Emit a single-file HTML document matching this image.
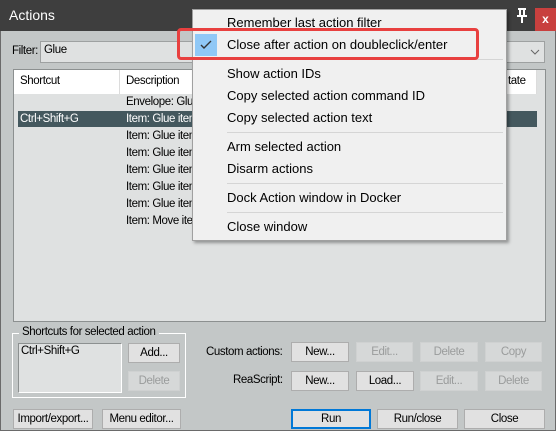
<!DOCTYPE html>
<html><head><style>
*{box-sizing:border-box;margin:0;padding:0}
body{width:556px;height:431px;overflow:hidden;background:#c3c7c7;font-family:"Liberation Sans",sans-serif;position:relative;font-size:12px;color:#000}
.a{position:absolute}
.t{font-size:11.5px;letter-spacing:-0.4px;white-space:nowrap}
.btn{position:absolute;background:#e1e1e1;border:1px solid #adadad;text-align:center;font-size:11.5px;letter-spacing:-0.4px;line-height:18px}
.dis{background:#d6d8d8;border-color:#cfd1d1;color:#9a9c9c}
.m{position:absolute;left:34px;font-size:13px;white-space:nowrap;color:#000}
.sep{position:absolute;left:34px;width:276px;height:1px;background:#d5d5d5}
</style></head><body>
<div class="a" style="left:0;top:0;width:556px;height:31px;background:#3e3e3e"></div>
<div class="a" style="left:9px;top:7px;color:#fff;font-size:14px">Actions</div>
<svg class="a" style="left:515px;top:8px" width="14" height="16"><path d="M3 1h8M5 1v6M9 1v6M2 8h10M7 8v7" stroke="#fff" stroke-width="2" fill="none"/></svg>
<div class="a" style="left:535px;top:8px;width:21px;height:23px;background:#c8403e;color:#fff;font-size:12px;font-weight:bold;text-align:center;line-height:22px">x</div>
<div class="a" style="left:0;top:31px;width:1px;height:400px;background:#6a6a6a"></div>
<div class="a" style="left:555px;top:31px;width:1px;height:400px;background:#6a6a6a"></div>
<div class="a" style="left:0;top:430px;width:556px;height:1px;background:#6a6a6a"></div>

<div class="a t" style="left:12px;top:45px">Filter:</div>
<div class="a" style="left:40px;top:41px;width:505px;height:22px;background:#dfe1e1;border:1px solid #9ea1a1"></div>
<div class="a t" style="left:44px;top:44px">Glue</div>
<svg class="a" style="left:530px;top:48px" width="10" height="8"><path d="M1 2l4 4 4-4" stroke="#666" fill="none"/></svg>

<div class="a" style="left:13px;top:69px;width:533px;height:253px;background:#dfe1e1;border:1px solid #8c9090"></div>
<div class="a" style="left:14px;top:70px;width:522px;height:24px;background:#fff"></div>
<div class="a" style="left:119px;top:70px;width:1px;height:24px;background:#dcdcdc"></div>
<div class="a" style="left:536px;top:70px;width:1px;height:24px;background:#dcdcdc"></div>
<div class="a t" style="left:20px;top:75px">Shortcut</div>
<div class="a t" style="left:126px;top:75px">Description</div>
<div class="a t" style="left:508px;top:75px">tate</div>
<div class="a" style="left:18px;top:111px;width:519px;height:16px;background:#44585e"></div>
<div class="a t" style="left:126px;top:96px">Envelope: Glue</div>
<div class="a t" style="left:20px;top:113px;color:#fff">Ctrl+Shift+G</div>
<div class="a t" style="left:126px;top:113px;color:#fff">Item: Glue item</div>
<div class="a t" style="left:126px;top:130px">Item: Glue item</div>
<div class="a t" style="left:126px;top:147px">Item: Glue item</div>
<div class="a t" style="left:126px;top:164px">Item: Glue item</div>
<div class="a t" style="left:126px;top:181px">Item: Glue item</div>
<div class="a t" style="left:126px;top:198px">Item: Glue item</div>
<div class="a t" style="left:126px;top:215px">Item: Move item</div>

<div class="a" style="left:192px;top:9px;width:315px;height:232px;background:#f0f0f0;border:1px solid #a0a0a0;box-shadow:2px 2px 3px rgba(0,0,0,.35)">
<div class="m" style="top:5px">Remember last action filter</div>
<div class="a" style="left:2px;top:24px;width:22px;height:22px;background:#90c8f6"></div>
<svg class="a" style="left:7px;top:30px" width="12" height="10"><path d="M1 5l3 3 7-7" stroke="#333" stroke-width="1.4" fill="none"/></svg>
<div class="m" style="top:27px">Close after action on doubleclick/enter</div>
<div class="sep" style="top:49px"></div>
<div class="m" style="top:56px">Show action IDs</div>
<div class="m" style="top:78px">Copy selected action command ID</div>
<div class="m" style="top:100px">Copy selected action text</div>
<div class="sep" style="top:122px"></div>
<div class="m" style="top:129px">Arm selected action</div>
<div class="m" style="top:151px">Disarm actions</div>
<div class="sep" style="top:173px"></div>
<div class="m" style="top:180px">Dock Action window in Docker</div>
<div class="sep" style="top:202px"></div>
<div class="m" style="top:209px">Close window</div>
</div>
<div class="a" style="left:177px;top:28px;width:302px;height:32px;border:3px solid #e8403f;border-radius:4px"></div>

<div class="a" style="left:12px;top:333px;width:174px;height:65px;border:1px solid #fff"></div>
<div class="a t" style="left:19px;top:326px;background:#c3c7c7;padding:0 3px">Shortcuts for selected action</div>
<div class="a" style="left:18px;top:343px;width:104px;height:50px;background:#dfe1e1;border:1px solid #8c9090;border-right-color:#fff;border-bottom-color:#fff"></div>
<div class="a t" style="left:21px;top:345px">Ctrl+Shift+G</div>
<div class="btn" style="left:128px;top:343px;width:52px;height:20px">Add...</div>
<div class="btn dis" style="left:128px;top:371px;width:52px;height:20px">Delete</div>

<div class="a t" style="left:206px;top:346px">Custom actions:</div>
<div class="btn" style="left:291px;top:342px;width:58px;height:20px">New...</div>
<div class="btn dis" style="left:356px;top:342px;width:57px;height:20px">Edit...</div>
<div class="btn dis" style="left:420px;top:342px;width:58px;height:20px">Delete</div>
<div class="btn dis" style="left:485px;top:342px;width:57px;height:20px">Copy</div>
<div class="a t" style="left:233px;top:374px">ReaScript:</div>
<div class="btn" style="left:291px;top:371px;width:58px;height:20px">New...</div>
<div class="btn" style="left:356px;top:371px;width:58px;height:20px">Load...</div>
<div class="btn dis" style="left:420px;top:371px;width:58px;height:20px">Edit...</div>
<div class="btn dis" style="left:485px;top:371px;width:57px;height:20px">Delete</div>

<div class="btn" style="left:13px;top:409px;width:80px;height:20px">Import/export...</div>
<div class="btn" style="left:102px;top:409px;width:79px;height:20px">Menu editor...</div>
<div class="btn" style="left:291px;top:409px;width:80px;height:20px;border:2px solid #0078d7;line-height:16px">Run</div>
<div class="btn" style="left:377px;top:409px;width:81px;height:20px">Run/close</div>
<div class="btn" style="left:464px;top:409px;width:81px;height:20px">Close</div>
</body></html>
